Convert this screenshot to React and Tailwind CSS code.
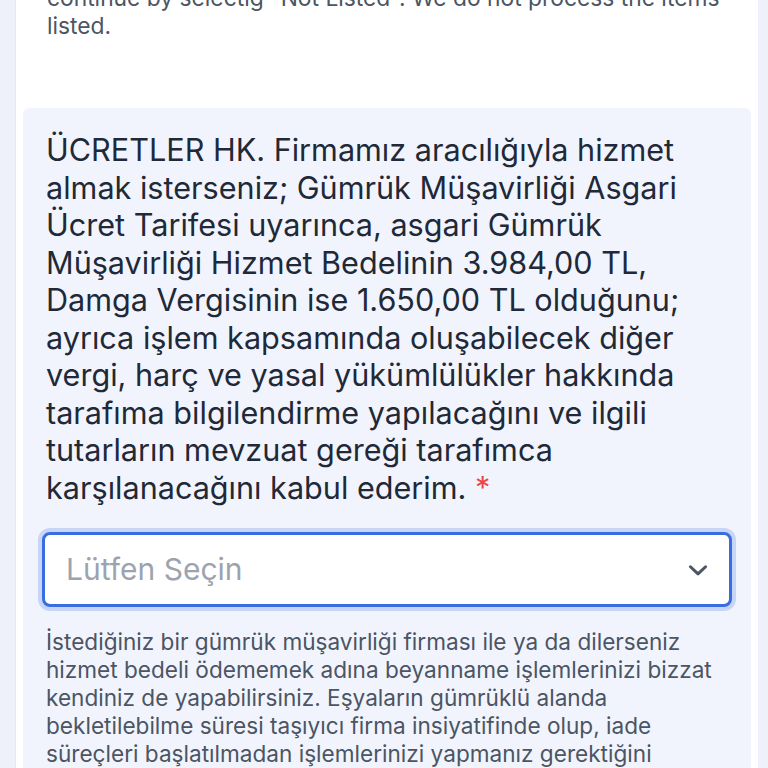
import React from 'react'

export default function App() {
  return (
    <div className="min-h-[768px] overflow-hidden bg-[#eef0fa]" style={{ fontFamily: 'Inter, "Noto Sans", sans-serif' }}>
      <div className="ml-[15px] mr-[10px] bg-white border-l border-[#e4e7f2]">
        {/* previous question tail */}
        <div className="-mt-[16px] pl-[31px] pr-[30px] pb-[68px] text-[22.8px] leading-[28px] text-[#4b5563]">
          continue by selectig "Not Listed". We do not process the items listed.
        </div>

        <div className="mx-[7px] rounded-t-md bg-[#f1f4fd] px-[23px] pt-[23px] pb-[40px]">
          <label className="block text-[30.6px] leading-[37.5px] text-[#1f2937]">
            ÜCRETLER HK. Firmamız aracılığıyla hizmet almak isterseniz; Gümrük Müşavirliği Asgari Ücret Tarifesi uyarınca, asgari Gümrük Müşavirliği Hizmet Bedelinin 3.984,00 TL, Damga Vergisinin ise 1.650,00 TL olduğunu; ayrıca işlem kapsamında oluşabilecek diğer vergi, harç ve yasal yükümlülükler hakkında tarafıma bilgilendirme yapılacağını ve ilgili tutarların mevzuat gereği tarafımca karşılanacağını kabul ederim. <span className="text-[#ef4444]">*</span>
          </label>

          <div className="mt-[26px] -mx-[4px] flex h-[75px] items-center justify-between rounded-lg border-[3px] border-[#3a6ee0] bg-white pl-[21px] pr-[18px] ring-4 ring-[#c7d6f8]">
            <span className="text-[30px] text-[#9ca3af]">Lütfen Seçin</span>
            <svg width="26" height="26" viewBox="0 0 24 24" fill="none" stroke="#4b5563" strokeWidth="2.8" strokeLinecap="round" strokeLinejoin="round">
              <path d="M5 9l7 6.5 7-6.5" />
            </svg>
          </div>

          <p className="mt-[21px] text-[22.6px] leading-[28px] text-[#4b5563]">
            İstediğiniz bir gümrük müşavirliği firması ile ya da dilerseniz hizmet bedeli ödememek adına beyanname işlemlerinizi bizzat kendiniz de yapabilirsiniz. Eşyaların gümrüklü alanda bekletilebilme süresi taşıyıcı firma insiyatifinde olup, iade süreçleri başlatılmadan işlemlerinizi yapmanız gerektiğini unutmayınız.
          </p>
        </div>
      </div>
    </div>
  )
}
